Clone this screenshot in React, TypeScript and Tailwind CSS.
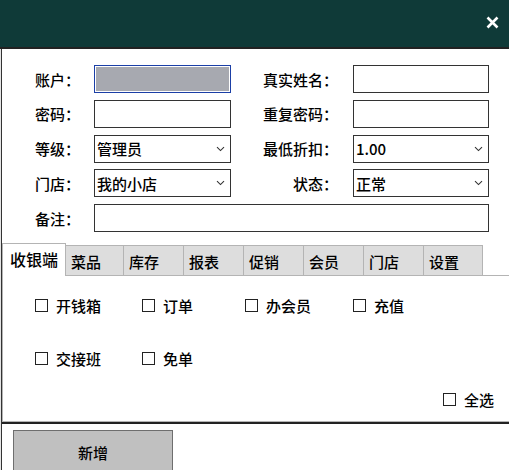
import type { ReactNode } from "react";

const font = "font-['Noto_Sans_CJK_SC','Noto_Sans',sans-serif] font-medium";

function Chevron() {
    return (
        <svg width="9" height="6" viewBox="0 0 9 6" className="shrink-0">
            <path d="M1 1.2 L4.5 4.6 L8 1.2" fill="none" stroke="#333" strokeWidth="1.1" />
        </svg>
    );
}

function Field({ className = "", children }: { className?: string; children?: ReactNode }) {
    return (
        <div className={`h-[28px] border border-[#333] bg-white flex items-center ${className}`}>
            {children}
        </div>
    );
}

function Select({ value }: { value: string }) {
    return (
        <Field className="pl-[2px] pr-[5px] justify-between">
            <span className="text-[15px] leading-none text-black">{value}</span>
            <Chevron />
        </Field>
    );
}

function Label({ text, right }: { text: string; right?: boolean }) {
    return (
        <div
            className={`h-[28px] flex items-center text-[15px] leading-none text-black ${
                right ? "justify-end pr-[15px]" : ""
            }`}
        >
            {text}
        </div>
    );
}

function Check({ label }: { label: string }) {
    return (
        <div className="flex items-center gap-[8px] h-[13px]">
            <div className="w-[13px] h-[13px] border border-[#222] bg-white shrink-0" />
            <span className="text-[15px] leading-none text-black whitespace-nowrap">{label}</span>
        </div>
    );
}

const tabs = [
    { name: "菜品", w: "w-[58px]" },
    { name: "库存", w: "w-[60px]" },
    { name: "报表", w: "w-[60px]" },
    { name: "促销", w: "w-[60px]" },
    { name: "会员", w: "w-[60px]" },
    { name: "门店", w: "w-[60px]" },
    { name: "设置", w: "w-[59px]" },
];

export default function App() {
    return (
        <div className={`w-[509px] h-[470px] overflow-hidden bg-white flex flex-col ${font}`}>
            {/* title bar */}
            <div className="h-[49px] shrink-0 bg-[#0f3a38] border-b-2 border-[#222] flex items-center justify-end pr-[10px]">
                <svg width="13" height="13" viewBox="0 0 13 13" className="mb-[2px]">
                    <path d="M1.5 1.5 L11.5 11.5 M11.5 1.5 L1.5 11.5" stroke="#fff" strokeWidth="2.6" />
                </svg>
            </div>

            <div className="flex-1 flex bg-white">
                <div className="w-px bg-[#e4e4e4]" />
                <div className="w-px bg-[#333]" />
                <div className="flex-1 flex flex-col">
                    {/* form */}
                    <div className="pt-[16px] pl-[33px] grid grid-cols-[59px_137px_122px_136px] gap-y-[6.75px]">
                        <Label text="账户：" />
                        <div className="h-[28px] border border-[#1b3fa6] p-px bg-white">
                            <div className="w-full h-full bg-[#a7a9b0]" />
                        </div>
                        <Label text="真实姓名：" right />
                        <Field />

                        <Label text="密码：" />
                        <Field />
                        <Label text="重复密码：" right />
                        <Field />

                        <Label text="等级：" />
                        <Select value="管理员" />
                        <Label text="最低折扣：" right />
                        <Select value="1.00" />

                        <Label text="门店：" />
                        <Select value="我的小店" />
                        <Label text="状态：" right />
                        <Select value="正常" />

                        <Label text="备注：" />
                        <Field className="col-span-3" />
                    </div>

                    {/* tabs */}
                    <div className="mt-[11px] h-[32px] flex items-end">
                        <div className="relative z-10 -mb-px w-[64px] h-[33px] border border-b-0 border-[#b4b4b4] bg-white pl-[7px] pt-[7px] text-[16px] leading-none text-black">
                            收银端
                        </div>
                        {tabs.map((t) => (
                            <div
                                key={t.name}
                                className={`${t.w} h-[30px] border-t border-r border-[#b4b4b4] bg-[#dddddd] pl-[5px] pt-[8px] text-[15px] leading-none text-black`}
                            >
                                {t.name}
                            </div>
                        ))}
                    </div>

                    {/* panel */}
                    <div className="h-[147px] border-t border-l border-b border-[#b4b4b4] flex flex-col">
                        <div className="pt-[23px] pl-[32px] grid grid-cols-[107px_103px_108px_100px]">
                            <Check label="开钱箱" />
                            <Check label="订单" />
                            <Check label="办会员" />
                            <Check label="充值" />
                        </div>
                        <div className="mt-[40px] pl-[32px] grid grid-cols-[107px_103px]">
                            <Check label="交接班" />
                            <Check label="免单" />
                        </div>
                        <div className="mt-[28px] pl-[440px] flex">
                            <Check label="全选" />
                        </div>
                    </div>
                    <div className="h-[2px] bg-[#222]" />

                    {/* bottom */}
                    <div className="pt-[6px] pl-[11px]">
                        <button className="w-[160px] h-[45px] border border-[#6e6e6e] bg-[#c0c0c0] text-[15px] leading-none text-black">
                            新增
                        </button>
                    </div>
                </div>
            </div>
        </div>
    );
}
